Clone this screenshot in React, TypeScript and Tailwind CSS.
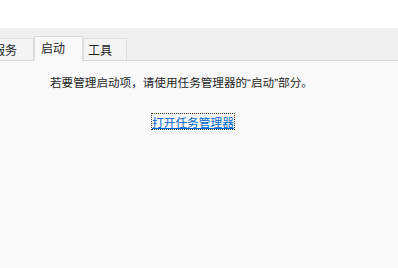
const font = { fontFamily: '"Noto Sans CJK SC", "Noto Sans", sans-serif' };
const latin = { fontFamily: '"Liberation Sans", sans-serif' };

function Tab({ label, active, wide }: { label: string; active?: boolean; wide?: boolean }) {
    if (active) {
        return (
            <div className="relative -mb-px flex h-[25px] items-start border border-b-0 border-[#d9d9d9] bg-[#f9f9f9] pl-[6px] pr-[17px] pt-[3px] text-[12px] leading-[16px] text-[#222]">
                {label}
            </div>
        );
    }
    return (
        <div
            className={
                wide
                    ? "flex h-[22px] items-center border border-b-0 border-[#dedede] bg-[#f4f4f4] pl-[4px] pr-[16px] text-[12px] leading-[16px] text-[#222]"
                    : "flex h-[22px] items-center border border-b-0 border-[#dedede] bg-[#f4f4f4] pl-[4px] pr-[14px] text-[12px] leading-[16px] text-[#222]"
            }
        >
            {label}
        </div>
    );
}

export default function App() {
    return (
        <div className="flex h-[268px] w-[398px] flex-col overflow-hidden bg-white" style={font}>
            <div className="h-[28px] bg-white" />
            <div className="flex h-[33px] items-end border-b border-[#d9d9d9] bg-[#f0f0f0]">
                <div className="ml-[-12px] flex items-end">
                    <Tab label="服务" wide />
                    <Tab label="启动" active />
                    <Tab label="工具" />
                </div>
            </div>
            <div className="flex flex-1 flex-col items-start bg-[#f9f9f9] pt-[13px]">
                <p className="ml-[50px] text-[11.6px] leading-[16px] text-[#1e1e1e]">
                    若要管理启动项，请使用任务管理器的<span style={latin}>“</span>启动<span style={latin}>”</span>部分。
                </p>
                <a
                    href="#"
                    className="ml-[152px] mt-[23px] text-[11.7px] leading-[15px] text-[#0066cc] underline outline outline-1 outline-dotted outline-[#333]"
                >
                    打开任务管理器
                </a>
            </div>
        </div>
    );
}
